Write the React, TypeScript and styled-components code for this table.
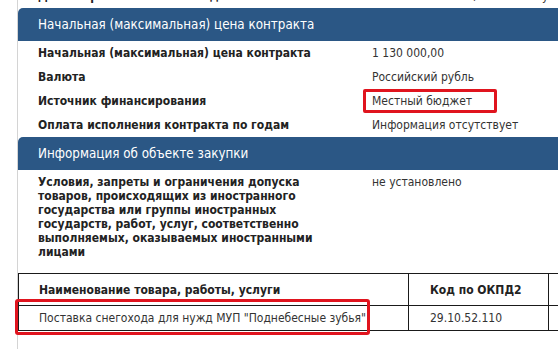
import React from 'react'
import styled, { createGlobalStyle } from 'styled-components'

const GlobalStyle = createGlobalStyle`
  html, body {
    margin: 0;
    padding: 0;
    background: #ffffff;
  }
  body {
    font-family: 'DejaVu Sans Condensed', 'DejaVu Sans', sans-serif;
    font-size: 12px;
    color: #333333;
    overflow: hidden;
  }
`

const infoRows = [
  { label: 'Начальная (максимальная) цена контракта', value: '1 130 000,00' },
  { label: 'Валюта', value: 'Российский рубль' },
  { label: 'Источник финансирования', value: 'Местный бюджет', marked: true },
  { label: 'Оплата исполнения контракта по годам', value: 'Информация отсутствует' },
]

const App: React.FC = () => {
  return (
    <>
      <GlobalStyle />
      <Page>
        <InfoRow $cut>
          <Label>Дата и время окончания подачи заявок</Label>
          <Value>10.02.2017 09:00 (по местному времени)</Value>
        </InfoRow>
        <SectionTitle>Начальная (максимальная) цена контракта</SectionTitle>
        {infoRows.map((row, index) => (
          <InfoRow key={index}>
            <Label>{row.label}</Label>
            <Value>{row.marked ? <Marked>{row.value}</Marked> : row.value}</Value>
          </InfoRow>
        ))}
        <SectionTitle>Информация об объекте закупки</SectionTitle>
        <TallRow>
          <WrapLabel>
            Условия, запреты и ограничения допуска товаров, происходящих из иностранного государства или
            группы иностранных государств, работ, услуг, соответственно выполняемых, оказываемых
            иностранными лицами
          </WrapLabel>
          <Value>не установлено</Value>
        </TallRow>
        <Table>
          <HeadRow>
            <Cell>Наименование товара, работы, услуги</Cell>
            <Cell>Код по ОКПД2</Cell>
            <Cell />
          </HeadRow>
          <DataRow>
            <Cell>Поставка снегохода для нужд МУП "Поднебесные зубья"</Cell>
            <Cell>29.10.52.110</Cell>
            <Cell />
            <RowFrame />
          </DataRow>
        </Table>
      </Page>
    </>
  )
}

export default App

const Page = styled.div`
  display: flex;
  flex-direction: column;
  margin-left: 17px;
  height: 349px;
  border-left: 1px solid #d4d4d4;
`

const SectionTitle = styled.div`
  height: 33px;
  flex-shrink: 0;
  display: flex;
  align-items: center;
  padding-left: 20px;
  background: #2b5785;
  color: #ffffff;
  font-size: 13.3px;
  border-top-left-radius: 5px;
`

const InfoRow = styled.div<{ $cut?: boolean }>`
  display: grid;
  grid-template-columns: 334px 1fr;
  align-items: center;
  height: 24px;
  flex-shrink: 0;
  padding-left: 20px;
  margin-top: ${(p) => (p.$cut ? '-16px' : '0')};
`

const Label = styled.div`
  font-weight: bold;
  color: #222222;
  white-space: nowrap;
`

const Value = styled.div`
  color: #333333;
  white-space: nowrap;
`

const Marked = styled.span`
  position: relative;
  &::after {
    content: '';
    position: absolute;
    left: -9px;
    top: -5px;
    width: 134px;
    height: 24px;
    box-sizing: border-box;
    border: 3px solid #e0141e;
    border-radius: 2px;
  }
`

const TallRow = styled.div`
  display: grid;
  grid-template-columns: 334px 1fr;
  align-items: start;
  padding: 5px 0 0 20px;
  line-height: 14px;
  height: 101px;
  flex-shrink: 0;
  box-sizing: border-box;
`

const WrapLabel = styled.div`
  width: 282px;
  font-weight: bold;
  color: #222222;
`

const Table = styled.div`
  margin-top: 2px;
  margin-right: -40px;
  border-top: 1px solid #1a1a1a;
  border-left: 1px solid #1a1a1a;
`

const HeadRow = styled.div`
  display: grid;
  grid-template-columns: 390px 140px 1fr;
  height: 32px;
  font-weight: bold;
  color: #222222;
`

const DataRow = styled.div`
  position: relative;
  display: grid;
  grid-template-columns: 390px 140px 1fr;
  height: 25px;
`

const Cell = styled.div`
  display: flex;
  align-items: center;
  padding-left: 20px;
  border-right: 1px solid #1a1a1a;
  border-bottom: 1px solid #1a1a1a;
  white-space: nowrap;
  &:nth-child(2) {
    padding-left: 21px;
  }
`

const RowFrame = styled.div`
  position: absolute;
  left: -4px;
  top: -7px;
  width: 355px;
  height: 36px;
  box-sizing: border-box;
  border: 3px solid #e0141e;
  border-radius: 3px;
`
